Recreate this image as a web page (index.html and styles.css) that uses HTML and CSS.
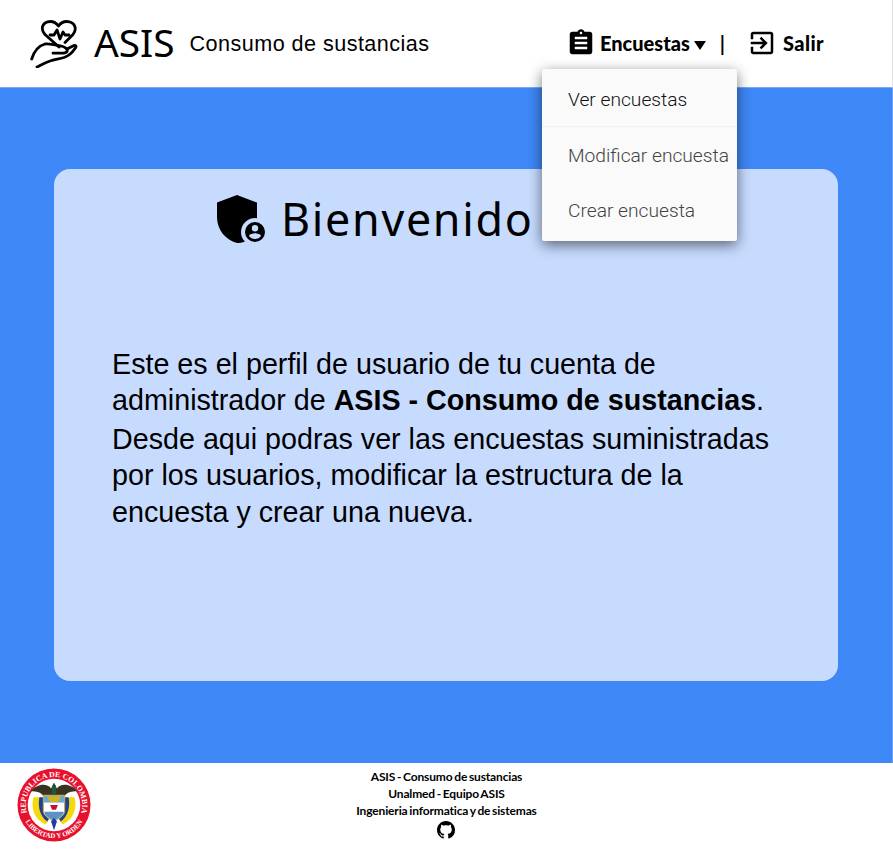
FILE: index.html
```html
<!DOCTYPE html>
<html lang="es">
  <head>
    <meta charset="UTF-8" />
    <meta name="viewport" content="width=device-width, initial-scale=1.0" />
    <title>ASIS - Consumo de sustancias</title>
    <link rel="stylesheet" href="styles.css">
  </head>
  <body>
    <header class="topbar">
      <div class="brand">
        <svg class="brand-icon" viewBox="0 0 48 48" fill="none" stroke="#000" stroke-width="2.800" stroke-linecap="round" stroke-linejoin="round">
          <path d="M29 27 L15 14.500 C10.500 9.500 12 3.500 17.500 1.800 C22 .8 26 2.500 28.500 6 C31 2.500 35.500 .8 40 2 C45.500 3.800 47 9.500 43 14.500 L35 22.500"/>
          <path d="M20 15 H24 L27 10 L30 19 L33 12 L35 15 H39"/>
          <path d="M1.700 39 C3.500 33 8 26 15 24 C20 23.500 26 25 31 26 C35 27 38 29 37 31.500 C36 33.500 33 33.200 30 33.200 H23"/>
          <path d="M37 29 L44 25.500 C46.500 25 46.500 27 45 28.500 C42 33 38.500 36 34 37.500 C29 39 24 39.500 20 41 C15 42.500 11 45 7 47"/>
        </svg>
        <span class="brand-name">ASIS</span>
        <span class="brand-sub">Consumo de sustancias</span>
      </div>
      <nav class="menu">
        <a class="menu-item">
          <svg class="menu-icon" viewBox="0 0 24 24"><path d="M19 3h-4.180C14.400 1.840 13.300 1 12 1s-2.400.84-2.820 2H5c-1.100 0-2 .9-2 2v14c0 1.100.9 2 2 2h14c1.100 0 2-.9 2-2V5c0-1.100-.9-2-2-2zm-7 0c.55 0 1 .45 1 1s-.45 1-1 1-1-.45-1-1 .45-1 1-1zm5 14H7v-2h10v2zm0-4H7v-2h10v2zm0-4H7V7h10v2z"/></svg>
          Encuestas
          <span class="caret"></span>
        </a>
        <span class="menu-sep">|</span>
        <a class="menu-item salir">
          <svg class="menu-icon exit" viewBox="0 0 24 24"><path d="M10.090 15.590 11.500 17l5-5-5-5-1.410 1.410L12.670 11H3v2h9.670l-2.580 2.590zM19 3H5c-1.110 0-2 .9-2 2v4h2V5h14v14H5v-4H3v4c0 1.100.89 2 2 2h14c1.100 0 2-.9 2-2V5c0-1.100-.9-2-2-2z"/></svg>
          Salir
        </a>
      </nav>
      <ul class="dropdown">
        <li class="dropdown-item active">Ver encuestas</li>
        <li class="dropdown-item">Modificar encuesta</li>
        <li class="dropdown-item">Crear encuesta</li>
      </ul>
    </header>

    <main class="content">
      <section class="card">
        <h1 class="card-title">
          <svg class="shield" viewBox="0 0 48 48">
            <path d="M20 0 L40 7.500 V23.200 A14 14 0 0 0 24 37 C24 41 25.500 44.500 28 46.500 C25 47.500 22.500 48 20 48 C8 45 0 34 0 22 V7.500 Z"/>
            <path fill-rule="evenodd" d="M38 27 A10 10 0 1 0 38 47 A10 10 0 1 0 38 27z M38 30 A3.200 3.200 0 1 1 38 36.400 A3.200 3.200 0 1 1 38 30z M38 44 C35.500 44 33.300 42.800 32 41 C32.300 39.300 36 38.300 38 38.300 C40 38.300 43.700 39.300 44 41 C42.700 42.800 40.500 44 38 44z"/>
          </svg>
          <span>Bienvenido</span>
        </h1>
        <p class="card-text">Este es el perfil de usuario de tu cuenta de administrador de <b>ASIS - Consumo de sustancias</b>.</p>
        <p class="card-text">Desde aqui podras ver las encuestas suministradas por los usuarios, modificar la estructura de la encuesta y crear una nueva.</p>
      </section>
    </main>

    <footer class="footer">
      <svg class="crest" viewBox="0 0 76 76">
        <defs>
          <path id="ring-top" d="M11.500 50 A29 29 0 1 1 64.500 50"/>
          <path id="ring-bottom" d="M7 52 A34 34 0 0 0 69 52"/>
        </defs>
        <circle cx="38" cy="38" r="37.500" fill="#e8112d"/>
        <circle cx="38" cy="38" r="27" fill="#fff"/>
        <text class="crest-text"><textPath href="#ring-top" startOffset="50%" text-anchor="middle">REPUBLICA DE COLOMBIA</textPath></text>
        <text class="crest-text small"><textPath href="#ring-bottom" startOffset="50%" text-anchor="middle">LIBERTAD Y ORDEN</textPath></text>
        <path d="M14 24 C20 16 31 15 35 21 L38 15 L41 21 C45 15 56 16 62 24 C56 24 51 25 49 29 H27 C25 25 20 24 14 24z" fill="#3b3322"/>
        <path d="M17 30 C14 40 17 52 29 58 L32 55 C26 50 24 40 25 30z" fill="#f5d90a"/>
        <path d="M59 30 C62 40 59 52 47 58 L44 55 C50 50 52 40 51 30z" fill="#f5d90a"/>
        <path d="M23 30 C21 40 24 50 31 55 L33 52 C29 47 27 40 28 30z" fill="#1f3f9e"/>
        <path d="M53 30 C55 40 52 50 45 55 L43 52 C47 47 49 40 48 30z" fill="#1f3f9e"/>
        <path d="M27 28 H49 V44 C49 49 43 52 38 55 C33 52 27 49 27 44z" fill="#fff" stroke="#c9a520"/>
        <rect x="27.500" y="28.500" width="21" height="7" fill="#6fa8c8"/>
        <path d="M31 29 H45 L42 35 H34z" fill="#d4b21a"/>
        <path d="M34 38 H42 L40 43 H36z" fill="#c8102e"/>
        <path d="M28 45 H48 C48 49 42 52 38 54.500 C34 52 28 49 28 45z" fill="#5b93c7"/>
        <path d="M35 55 L38 51 L41 55 L38 64z" fill="#1f3f9e"/>
        <path d="M36 18 H40 V27 H36z" fill="#1d5c3a"/>
      </svg>
      <div class="footer-text">
        <span>ASIS - Consumo de sustancias</span>
        <span>Unalmed - Equipo ASIS</span>
        <span>Ingenieria informatica y de sistemas</span>
        <svg class="github" viewBox="0 0 16 16"><path d="M8 0C3.580 0 0 3.580 0 8c0 3.540 2.290 6.530 5.470 7.590.4.070.55-.17.55-.38 0-.19-.01-.82-.01-1.490-2.010.37-2.530-.49-2.690-.94-.09-.23-.48-.94-.82-1.130-.28-.15-.68-.52-.01-.53.63-.01 1.080.58 1.230.82.720 1.210 1.870.87 2.330.66.070-.52.280-.87.510-1.070-1.780-.2-3.640-.89-3.640-3.950 0-.87.310-1.590.820-2.150-.08-.2-.36-1.020.08-2.120 0 0 .67-.21 2.200.82.640-.18 1.320-.27 2-.27s1.360.09 2 .27c1.530-1.040 2.200-.82 2.200-.82.440 1.100.16 1.920.08 2.120.51.56.82 1.270.82 2.150 0 3.070-1.870 3.750-3.650 3.950.29.25.54.73.54 1.480 0 1.070-.01 1.930-.01 2.200 0 .21.150.46.550.38A8.010 8.010 0 0 0 16 8c0-4.420-3.580-8-8-8z"/></svg>
      </div>
    </footer>
  </body>
</html>
```

FILE: styles.css
```css
* {
  box-sizing: border-box;
}
body {
  margin: 0;
  width: 893px;
  height: 849px;
  display: flex;
  flex-direction: column;
  background-color: #fff;
  overflow: hidden;
}
.topbar {
  position: relative;
  height: 88px;
  flex: none;
  display: flex;
  align-items: center;
  justify-content: space-between;
  padding: 0 68px 0 30px;
  background-color: #fff;
  border-bottom: 1px solid #76a9f5;
  border-right: 1px solid #e2e2e2;
}
.brand {
  display: flex;
  align-items: center;
}
.brand-icon {
  width: 48px;
  height: 48px;
}
.brand-name {
  margin-left: 16px;
  margin-top: -4px;
  font-family: "Noto Sans", sans-serif;
  font-size: 38.800px;
  line-height: 40px;
  color: #000;
}
.brand-sub {
  margin-left: 15px;
  font-family: "Liberation Sans", sans-serif;
  font-size: 21.600px;
  letter-spacing: 0.45px;
  color: #000;
}
.menu {
  display: flex;
  align-items: center;
  margin-top: -1px;
  font-family: "Lato", sans-serif;
  font-weight: 900;
  font-size: 20px;
  color: #000;
}
.menu-item {
  display: flex;
  align-items: center;
}
.salir {
  letter-spacing: 0.4px;
}
.menu-icon {
  width: 30px;
  height: 30px;
  margin-right: 4px;
}
.menu-icon.exit {
  margin-right: 6px;
}
.caret {
  margin-left: 4px;
  margin-top: 4px;
  border-left: 6px solid transparent;
  border-right: 6px solid transparent;
  border-top: 9px solid #000;
}
.menu-sep {
  margin: 0 22px 0 14px;
  font-weight: 700;
}
.dropdown {
  position: absolute;
  z-index: 2;
  left: 542px;
  top: 69px;
  width: 195px;
  margin: 0;
  padding: 0;
  list-style: none;
  background-color: #fafafa;
  border-radius: 2px;
  box-shadow: 0 4px 14px rgba(0, 0, 0, 0.55);
  font-family: Roboto, sans-serif;
  font-weight: 300;
  font-size: 19.200px;
  color: #444;
}
.dropdown-item {
  height: 55px;
  padding-left: 26px;
  padding-top: 1px;
  display: flex;
  align-items: center;
  white-space: nowrap;
}
.dropdown-item.active {
  height: 58px;
  padding-top: 3px;
  color: #111;
  border-bottom: 1px solid #f0f0f0;
}
.dropdown-item:last-child {
  height: 59px;
  padding-top: 0;
  padding-bottom: 3px;
}
.content {
  height: 675px;
  flex: none;
  padding: 81px 54px 82px 54px;
  background-color: #3f88f8;
  border-right: 1px solid #6aa3f5;
}
.card {
  height: 512px;
  padding: 24px 50px 0 58px;
  background-color: #c7dbff;
  border-radius: 16px;
}
.card-title {
  margin: 0 0 101px 105px;
  display: flex;
  align-items: center;
  font-family: "Noto Sans", sans-serif;
  font-weight: 400;
  font-size: 44.800px;
  letter-spacing: 1.700px;
  line-height: 52px;
  color: #000;
}
.shield {
  width: 48px;
  height: 48px;
  margin-right: 16px;
}
.card-text {
  margin: 0 0 2.500px;
  font-family: "Liberation Sans", sans-serif;
  font-size: 28.700px;
  line-height: 36.300px;
  color: #000;
}
.footer {
  position: relative;
  flex: 1;
  display: flex;
  justify-content: center;
  background-color: #fff;
}
.crest {
  position: absolute;
  left: 17px;
  top: 5px;
  width: 74px;
  height: 74px;
}
.crest-text {
  font-family: "Liberation Serif", serif;
  font-weight: 700;
  font-size: 8px;
  fill: #fff;
}
.crest-text.small {
  font-size: 7.200px;
}
.footer-text {
  display: flex;
  flex-direction: column;
  align-items: center;
  padding-top: 5px;
  font-family: "Lato", sans-serif;
  font-weight: 700;
  font-size: 12px;
  letter-spacing: -0.15px;
  word-spacing: -1px;
  line-height: 17px;
  color: #000;
}
.github {
  width: 18px;
  height: 18px;
  margin-top: 2px;
}
```
